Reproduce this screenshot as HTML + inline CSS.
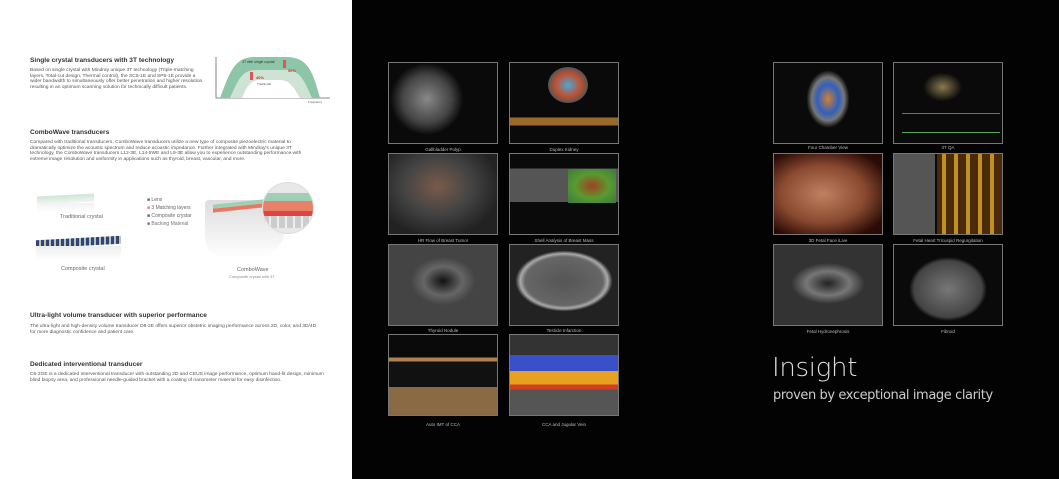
<!DOCTYPE html>
<html><head><meta charset="utf-8"><style>
*{margin:0;padding:0;box-sizing:border-box}
body{width:1059px;height:479px;overflow:hidden;background:#030303;position:relative;font-family:"Liberation Sans",sans-serif}
.l{position:absolute;left:0;top:0;width:352px;height:479px;background:#fff}
.a{position:absolute}
h2{position:absolute;font-size:6.6px;font-weight:bold;color:#333;left:30px;white-space:nowrap}
p.b{position:absolute;font-size:4.9px;line-height:5.6px;color:#555;left:30px}
.t{position:absolute;width:110px;height:82px;border:1px solid #777;background:#0a0a0a;overflow:hidden}
.c{position:absolute;width:130px;text-align:center;font-size:4.5px;color:#bbb}
.sm{font-size:5px;color:#666;position:absolute}
</style></head><body>
<div class="l">
<h2 style="top:57px">Single crystal transducers with 3T technology</h2>
<p class="b" style="top:68px;width:175px">Based on single crystal with Mindray unique 3T technology (Triple-matching layers, Total-cut design, Thermal control), the SC5-1E and SP5-1E provide a wider bandwidth to simultaneously offer better penetration and higher resolution, resulting in an optimum scanning solution for technically difficult patients.</p>
<svg class="a" style="left:208px;top:52px" width="125" height="52" viewBox="0 0 125 52">
<path d="M8 5 V46 H122" stroke="#666" stroke-width="0.8" fill="none"/>
<path d="M12 46 C22 20 26 6 45 5 H80 C100 6 105 20 112 46Z" fill="#8cc5a8"/>
<path d="M22 46 C30 28 34 18 48 18 H78 C92 18 96 28 104 46Z" fill="#cfe3d4"/>
<path d="M34 46 C38 36 42 28 52 28 H72 C82 28 86 36 92 46Z" fill="#fff"/>
<rect x="42" y="20" width="3" height="8" fill="#d55"/><rect x="75" y="8" width="3" height="8" fill="#d55"/>
<text x="34" y="11" font-size="3.5" fill="#333">3T with single crystal</text>
<text x="80" y="20" font-size="4" fill="#c33" font-weight="bold">50%</text>
<text x="48" y="27" font-size="4" fill="#c33" font-weight="bold">40%</text>
<text x="49" y="33" font-size="3" fill="#555">Traditional</text>
<text x="100" y="51" font-size="3" fill="#555">Frequency</text>
</svg>
<h2 style="top:129px">ComboWave transducers</h2>
<p class="b" style="top:140px;width:275px">Compared with traditional transducers, ComboWave transducers utilize a new type of composite piezoelectric material to dramatically optimize the acoustic spectrum and reduce acoustic impedance. Further integrated with Mindray's unique 3T technology, the ComboWave transducers L12-3E, L14-5WE and L9-3E allow you to experience outstanding performance with extreme image resolution and uniformity in applications such as thyroid, breast, vascular, and more.</p>
<div class="a" style="left:37px;top:195px;width:57px;height:8px;background:linear-gradient(#cfe6d8,#eef5f0);transform:skewY(-3deg)"></div>
<div class="a" style="left:37px;top:203px;width:57px;height:10px;background:linear-gradient(#f2f2f2,#fff)"></div>
<div class="sm" style="left:60px;top:214px;font-size:5.5px">Traditional crystal</div>
<div class="a" style="left:36px;top:238px;width:85px;height:8px;background:repeating-linear-gradient(90deg,#3a3f7a 0 3px,#a9cbb8 3px 5px);transform:skewY(-3deg)"></div>
<div class="a" style="left:36px;top:246px;width:85px;height:14px;background:linear-gradient(#eee,#fff)"></div>
<div class="sm" style="left:61px;top:266px;font-size:5.5px">Composite crystal</div>
<div class="a" style="left:205px;top:200px;width:80px;height:58px;background:linear-gradient(#ddd,#fff);border-radius:4px 4px 30px 20px"></div>
<div class="a" style="left:213px;top:205px;width:70px;height:4px;background:#e87863;transform:skewY(-6deg)"></div>
<div class="a" style="left:213px;top:201px;width:70px;height:4px;background:#9fcfb4;transform:skewY(-6deg)"></div>
<div class="a" style="left:262px;top:182px;width:52px;height:52px;border-radius:50%;background:#e8e8e8;border:1px solid #ddd;overflow:hidden">
<div style="position:absolute;left:0;top:10px;width:52px;height:8px;background:#9fcfb4"></div>
<div style="position:absolute;left:0;top:18px;width:52px;height:10px;background:#e8806a"></div>
<div style="position:absolute;left:0;top:28px;width:52px;height:5px;background:#d44"></div>
<div style="position:absolute;left:0;top:33px;width:52px;height:12px;background:repeating-linear-gradient(90deg,#ccc 0 6px,#eee 6px 8px)"></div></div>
<div class="sm" style="left:147px;top:197px">■ Lens</div>
<div class="sm" style="left:147px;top:205px"><span style="color:#e87863">■</span> 3 Matching layers</div>
<div class="sm" style="left:147px;top:213px">■ Composite crystar</div>
<div class="sm" style="left:147px;top:221px;color:#777">■ Backing Material</div>
<div class="sm" style="left:237px;top:267px;font-size:5.5px">ComboWave</div>
<div class="sm" style="left:229px;top:274px;font-size:4px;color:#888">Composite crystal with 3T</div>
<h2 style="top:312px">Ultra-light volume transducer with superior performance</h2>
<p class="b" style="top:324px;width:290px">The ultra-light and high-density volume transducer D8-2E offers superior obstetric imaging performance across 2D, color, and 3D/4D for more diagnostic confidence and patient care.</p>
<h2 style="top:361px">Dedicated interventional transducer</h2>
<p class="b" style="top:372px;width:295px">C6-2GE is a dedicated interventional transducer with outstanding 2D and CEUS image performance, optimum hand-fit design, minimum blind biopsy area, and professional needle-guided bracket with a coating of nanometer material for easy disinfection.</p>
</div>

<div class="t" style="left:388px;top:62px;background:radial-gradient(ellipse 45% 60% at 35% 45%,#888,#444 50%,#0a0a0a 75%)"></div>
<div class="t" style="left:509px;top:62px;background:linear-gradient(#0a0a0a 0 60%,transparent 60%),linear-gradient(#0a0a0a 0 68%,#9a6a2a 68% 78%,#0a0a0a 78%)"><div style="position:absolute;left:38px;top:4px;width:40px;height:36px;border-radius:50%;background:radial-gradient(#4aa8d8,#c05030 45%,#555 70%)"></div></div>
<div class="t" style="left:388px;top:153px;background:radial-gradient(ellipse at 45% 40%,#7a5a4a,#444 40%,#222 75%)"></div>
<div class="t" style="left:509px;top:153px;background:linear-gradient(#0a0a0a 0 18%,#555 18% 60%,#0a0a0a 60%)"><div style="position:absolute;left:58px;top:15px;width:48px;height:34px;background:radial-gradient(#a04020,#5a9a30 50%,#3a7a40)"></div></div>
<div class="t" style="left:388px;top:244px;background:radial-gradient(ellipse 30% 30% at 50% 45%,#111,#666 60%,#444)"></div>
<div class="t" style="left:509px;top:244px;background:radial-gradient(ellipse 45% 38% at 50% 45%,#555,#666 80%,#aaa 90%,#222)"></div>
<div class="t" style="left:388px;top:334px;background:linear-gradient(#0a0a0a 0 28%,#b08050 28% 33%,#111 33% 65%,#8a6a45 65%)"></div>
<div class="t" style="left:509px;top:334px;background:linear-gradient(#333 0 25%,#3a50c8 25% 45%,#e8a020 45% 62%,#d04020 62% 68%,#555 68%)"></div>
<div class="c" style="left:378px;top:147px">Gallbladder Polyp</div>
<div class="c" style="left:499px;top:147px">Duplex Kidney</div>
<div class="c" style="left:378px;top:238px">HR Flow of Breast Tumor</div>
<div class="c" style="left:499px;top:238px">Shell Analysis of Breast Mass</div>
<div class="c" style="left:378px;top:328px">Thyroid Nodule</div>
<div class="c" style="left:499px;top:328px">Testicle Infarction</div>
<div class="c" style="left:378px;top:422px">Auto IMT of CCA</div>
<div class="c" style="left:499px;top:422px">CCA and Jugular Vein</div>

<div class="t" style="left:773px;top:62px;background:radial-gradient(ellipse 25% 45% at 50% 45%,#d08030,#3060c0 40%,#777 60%,#0a0a0a 80%)"></div>
<div class="t" style="left:893px;top:62px;background:radial-gradient(ellipse 20% 20% at 45% 30%,#8a7a50,#0a0a0a 90%)"><div style="position:absolute;left:8px;top:50px;width:98px;height:20px;border-top:1px solid #a55;border-bottom:1px solid #5a5"></div></div>
<div class="t" style="left:773px;top:153px;background:radial-gradient(ellipse at 45% 50%,#c08060,#8a4a30 50%,#2a0a05 85%)"></div>
<div class="t" style="left:893px;top:153px;background:linear-gradient(90deg,#555 0 38%,#0a0a0a 38% 40%,transparent 40%),repeating-linear-gradient(90deg,#c09020 0 4px,#4a2a0a 4px 12px)"></div>
<div class="t" style="left:773px;top:244px;background:radial-gradient(ellipse 40% 30% at 50% 48%,#222,#777 50%,#333 85%)"></div>
<div class="t" style="left:893px;top:244px;background:radial-gradient(ellipse 45% 50% at 50% 55%,#777,#444 70%,#0a0a0a 80%)"></div>
<div class="c" style="left:763px;top:145px">Four Chamber View</div>
<div class="c" style="left:883px;top:145px">3T QA</div>
<div class="c" style="left:763px;top:238px">3D Fetal Face iLive</div>
<div class="c" style="left:883px;top:238px">Fetal Heart Tricuspid Regurgitation</div>
<div class="c" style="left:763px;top:329px">Fetal Hydronephrosis</div>
<div class="c" style="left:883px;top:329px">Fibroid</div>
<div class="a" style="left:772px;top:353px;font-size:26px;color:#ddd;font-family:'DejaVu Sans',sans-serif;font-weight:300;letter-spacing:-0.3px">Insight</div>
<div class="a" style="left:773px;top:388px;font-size:13px;color:#ccc;font-family:'DejaVu Sans',sans-serif;white-space:nowrap;letter-spacing:-0.4px">proven by exceptional image clarity</div>
</body></html>
